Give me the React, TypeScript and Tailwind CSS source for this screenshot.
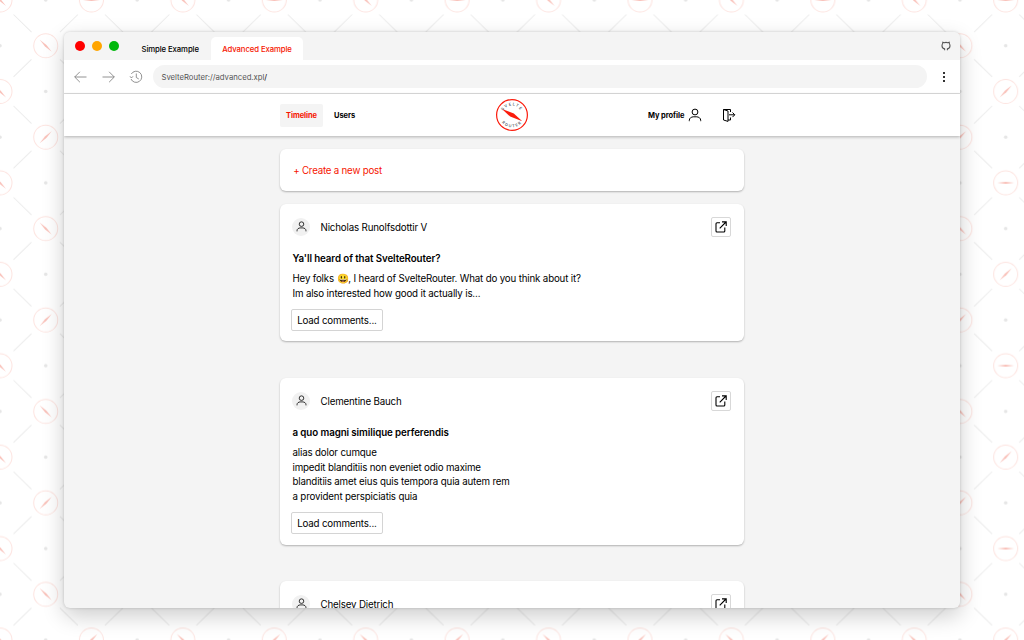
import React from "react";

const P = 640 / 7;

function Dial({ x, y, angle }: { x: number; y: number; angle: number }) {
  return (
    <g transform={`translate(${x} ${y})`}>
      <circle r="12" fill="none" stroke="#fde3df" strokeWidth="1" />
      <path d="M-8.5 0 0 -1 8.5 0 0 1Z" fill="#f9c0b8" transform={`rotate(${angle})`} />
    </g>
  );
}

function Backdrop() {
  const cells: [number, number][] = [[0, 0], [0, P], [P, 0], [P, P]];
  const dials: [number, number, number][] = [
    [0, 0, 45], [2, 0, 45], [0, 2, 45], [2, 2, 45],
    [0, 1, 45], [2, 1, 45], [1, 0, 0], [1, 2, 0], [1, 1, -45],
    [0.5, 0.5, 45], [1.5, 0.5, 45], [0.5, 1.5, -45], [1.5, 1.5, -45],
  ];
  const dots: [number, number][] = [
    [0.5, 0], [1.5, 0], [0.5, 1], [1.5, 1], [0.5, 2], [1.5, 2],
    [0, 0.5], [1, 0.5], [2, 0.5], [0, 1.5], [1, 1.5], [2, 1.5],
  ];
  return (
    <svg className="absolute inset-0" width="1024" height="640" aria-hidden="true">
      <defs>
        <pattern id="dials" width={2 * P} height={2 * P} patternUnits="userSpaceOnUse">
          {cells.map(([x, y]) => (
            <path
              key={`${x}-${y}`}
              transform={`translate(${x} ${y})`}
              d="M13.5 14.5 31.5 32M59.9 59.4 77.9 76.9M77.9 14.5 59.9 32M31.5 59.4 13.5 76.9"
              stroke="#ebebeb"
            />
          ))}
          {dials.map(([x, y, a]) => (
            <Dial key={`${x}-${y}`} x={x * P} y={y * P} angle={a} />
          ))}
          {dots.map(([x, y]) => (
            <circle key={`${x}-${y}`} cx={x * P} cy={y * P} r="1.8" fill="#e6e6e6" />
          ))}
        </pattern>
      </defs>
      <rect width="1024" height="640" fill="url(#dials)" />
    </svg>
  );
}

function Person({ className }: { className: string }) {
  return (
    <svg viewBox="0 0 14 14" className={className} fill="none" stroke="currentColor">
      <circle cx="7" cy="4" r="2.9" />
      <path d="M1.3 13.2V12.4C1.3 9.9 3.4 9 5.2 8.8H8.8C10.6 9 12.7 9.9 12.7 12.4V13.2" />
    </svg>
  );
}

function Logo() {
  return (
    <svg width="34" height="34" viewBox="-17 -17 34 34" className="block">
      <defs>
        <path id="arcTop" d="M-9.7 0A9.7 9.7 0 0 1 9.7 0" />
        <path id="arcBottom" d="M-12.4 0A12.4 12.4 0 0 0 12.4 0" />
      </defs>
      <circle r="15.4" fill="#fff" stroke="#fb1b0c" strokeWidth="1.2" />
      <path d="M-10 -6 1.8 -1.5 10.3 6.3 -1.8 1.6Z" fill="#fb1b0c" />
      <g fill="#3c4650" fontSize="3.8" fontWeight="500" textAnchor="middle" letterSpacing="1.3">
        <text><textPath href="#arcTop" startOffset="50%">SVELTE</textPath></text>
        <text><textPath href="#arcBottom" startOffset="50%">ROUTER</textPath></text>
      </g>
    </svg>
  );
}

function OpenButton() {
  return (
    <button className="flex h-[20px] w-[20px] items-center justify-center rounded-[2px] border border-[#d8d8d8] bg-white">
      <svg width="12" height="12" viewBox="0 0 12 12" fill="none" stroke="#000" strokeWidth="1.1">
        <path d="M5 1.8H2Q1 1.8 1 2.8V10Q1 11 2 11H8.8Q9.8 11 9.8 10V6.6M7 .9H11.2V5M11 1 4.7 7.3" />
      </svg>
    </button>
  );
}

type PostData = { author: string; title: string; lines: string[]; size: string };

const posts: PostData[] = [
  {
    author: "Nicholas Runolfsdottir V",
    title: "Ya'll heard of that SvelteRouter?",
    lines: [
      "Hey folks 😃, I heard of SvelteRouter. What do you think about it?",
      "Im also interested how good it actually is...",
    ],
    size: "h-[137.5px] mb-[36.5px]",
  },
  {
    author: "Clementine Bauch",
    title: "a quo magni similique perferendis",
    lines: [
      "alias dolor cumque",
      "impedit blanditiis non eveniet odio maxime",
      "blanditiis amet eius quis tempora quia autem rem",
      "a provident perspiciatis quia",
    ],
    size: "h-[167px] mb-[36px]",
  },
  { author: "Chelsey Dietrich", title: "", lines: [], size: "h-[138px]" },
];

const card = "shrink-0 rounded-[6px] bg-white shadow-[0_1px_2px_rgba(0,0,0,0.28)]";

function Post({ author, title, lines, size }: PostData) {
  return (
    <article className={`${card} ${size} pr-[12px] pl-[12.2px] pt-[13px] text-[9.75px] tracking-[-0.17px]`}>
      <header className="flex h-[20px] items-center">
        <span className="flex h-[18px] w-[18px] items-center justify-center rounded-full bg-[#f1f1f1]">
          <Person className="h-[11px] w-[11px]" />
        </span>
        <span className="ml-[10px] flex-1 pt-[3.4px]">{author}</span>
        <span className="mr-[1px]"><OpenButton /></span>
      </header>
      {title && (
        <>
          <h2 className="mt-[15.3px] leading-[14px] font-semibold tracking-[-0.09px]">{title}</h2>
          <div className="mt-[6.5px] leading-[14.6px]">
            {lines.map((l) => <p key={l} className="whitespace-nowrap">{l}</p>)}
          </div>
          <button className="mt-[7.2px] -ml-[1.8px] block h-[22px] w-[92.5px] rounded-[2px] border border-[#d4d4d4] pt-[1px] leading-[20px]">
            Load comments...
          </button>
        </>
      )}
    </article>
  );
}

export default function App() {
  return (
    <div className="relative h-[640px] w-[1024px] overflow-hidden bg-white px-[64px] pt-[32px] font-['Inter',sans-serif] text-black">
      <Backdrop />
      <main className="relative flex h-[576px] w-[896px] flex-col overflow-hidden rounded-[6px] bg-[#f4f4f4] shadow-[0_8px_22px_rgba(0,0,0,0.2),0_0_3px_rgba(0,0,0,0.18)]">
        <div className="flex h-[28px] shrink-0 items-end bg-[#f4f4f4] pl-[11px] text-[7.75px] leading-[14px] font-medium tracking-[-0.1px] whitespace-nowrap">
          <div className="flex gap-[7px] pb-[9px]">
            <i className="h-[10px] w-[10px] rounded-full bg-[#ff0000]" />
            <i className="h-[10px] w-[10px] rounded-full bg-[#ffa500]" />
            <i className="h-[10px] w-[10px] rounded-full bg-[#00b80c]" />
          </div>
          <span className="ml-[22.5px] w-[69.5px] pb-[4px]">Simple Example</span>
          <span className="h-[23px] w-[92px] rounded-t-[5px] bg-white pt-[5px] text-center text-[#f61500]">Advanced Example</span>
          <svg className="mr-[9.5px] mb-[9px] ml-auto h-[10px] w-[10px]" viewBox="0 0 10 10" fill="none" stroke="#555" strokeWidth="1.1">
            <path d="M3.6 9.2V7.9C1.8 7.5 1 6.3 1 4.7 1 3.8 1.2 3.1 1.7 2.5L1.8 1.2 3.2 1.7Q5 1.1 6.8 1.7L8.2 1.2 8.3 2.5C8.8 3.1 9 3.8 9 4.7 9 6.3 8.2 7.5 6.4 7.9V9.2" />
          </svg>
        </div>
        <div className="flex h-[34px] shrink-0 items-center border-b border-[#dedede] bg-white pl-[10px]">
          <svg height="14" viewBox="0 0 70 14" className="w-[70px]" fill="none" stroke="#777" strokeWidth=".8">
            <path d="M12.5 7H.7M5.9 1.8 .7 7 5.9 12.2M28.5 7H40.3M35.1 1.8 40.3 7 35.1 12.2" />
            <path d="M57.3 4A5.6 5.6 0 1 1 57 9M56 6.3 57.4 8 59 6.3M62.3 3.5V7.5L64.8 9" />
          </svg>
          <div className="ml-[9px] flex h-[23px] w-[774px] items-center rounded-full bg-[#f4f4f4] pt-[2px] pl-[8.5px] text-[7.75px] tracking-[-0.03px] text-[#555]">
            SvelteRouter://advanced.xpl<span className="text-black">/</span>
          </div>
          <svg className="ml-[14.5px]" width="4" height="12" viewBox="0 0 4 12"><circle cx="2" cy="2" r="1.1" /><circle cx="2" cy="6" r="1.1" /><circle cx="2" cy="10" r="1.1" /></svg>
        </div>
        <nav className="relative z-10 flex h-[42px] shrink-0 items-center bg-white px-[216px] text-[7.5px] font-bold tracking-[-0.08px] shadow-[0_1px_3px_rgba(0,0,0,0.28)]">
          <span className="flex h-[23px] w-[43px] items-center justify-center rounded-[2px] bg-[#f4f4f4] pt-[1.5px] text-[#f61500]">Timeline</span>
          <span className="ml-[11px] w-[161px] pt-[1.5px]">Users</span>
          <Logo />
          <span className="ml-[119px] w-[39.5px] pt-[1.5px] whitespace-nowrap">My profile</span>
          <Person className="h-[14px] w-[14px]" />
          <svg className="ml-[20.5px]" width="14" height="14" viewBox="0 0 14 14" fill="none" stroke="#000" strokeWidth="1">
            <path d="M1.5 12V1.5H8.5V4M8.5 9.5V12H6M1.5 1.5 6 3V13.4L1.5 12M7 6.8H12.5M10.5 4.5 12.8 6.8 10.5 9.1" />
          </svg>
        </nav>
        <section className="flex min-h-0 flex-1 flex-col overflow-hidden pr-[216.5px] pl-[216.3px] pt-[12.5px]">
          <div className={`${card} mb-[12.5px] flex h-[42.5px] items-center pt-[2.5px] pl-[12.9px] text-[9.75px] tracking-[-0.22px] text-[#f61500]`}>+ Create a new post</div>
          {posts.map((p) => <Post key={p.author} {...p} />)}
        </section>
      </main>
    </div>
  );
}
